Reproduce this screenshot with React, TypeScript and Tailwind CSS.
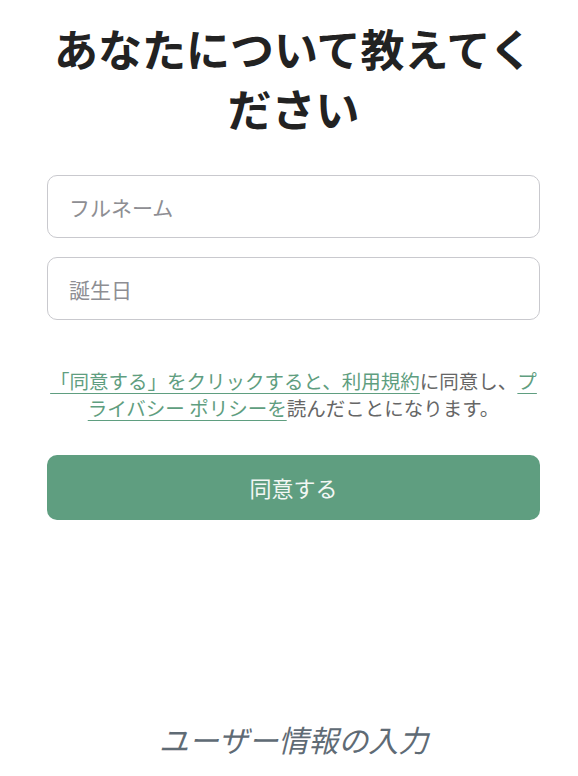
export default function App() {
  return (
    <div
      className="flex min-h-[776px] flex-col bg-white pl-[47px] pr-[38px]"
      style={{ fontFamily: '"Noto Sans CJK JP", "Noto Sans", sans-serif' }}
    >
      <h1 className="pt-[18px] text-center text-[44px] font-bold leading-[60px] text-[#222222]">
        あなたについて教えてください
      </h1>

      <form className="mt-[37px] flex flex-col gap-[19px]">
        <input
          type="text"
          placeholder="フルネーム"
          className="h-[63px] w-full rounded-[10px] border border-[#c9c9ce] px-[21px] text-[21px] text-[#222] outline-none placeholder:text-[#8e8e93]"
        />
        <input
          type="text"
          placeholder="誕生日"
          className="h-[63px] w-full rounded-[10px] border border-[#c9c9ce] px-[21px] text-[21px] text-[#222] outline-none placeholder:text-[#8e8e93]"
        />
      </form>

      <p className="mt-[47px] text-center text-[19.5px] leading-[27px] text-[#666666]">
        <a href="#" className="text-[#5f9e80] underline underline-offset-4">
          「同意する」をクリックすると、利用規約
        </a>
        に同意し、
        <a href="#" className="text-[#5f9e80] underline underline-offset-4">
          プライバシー ポリシーを
        </a>
        読んだことになります。
      </p>

      <button
        type="button"
        className="mt-[34px] h-[65px] w-full rounded-[10px] bg-[#5f9e80] text-[22px] text-[#f2f7f4]"
      >
        同意する
      </button>

      <div className="mt-auto pb-[14px] text-center text-[30px] italic text-[#5f6b75]">
        ユーザー情報の入力
      </div>
    </div>
  );
}
